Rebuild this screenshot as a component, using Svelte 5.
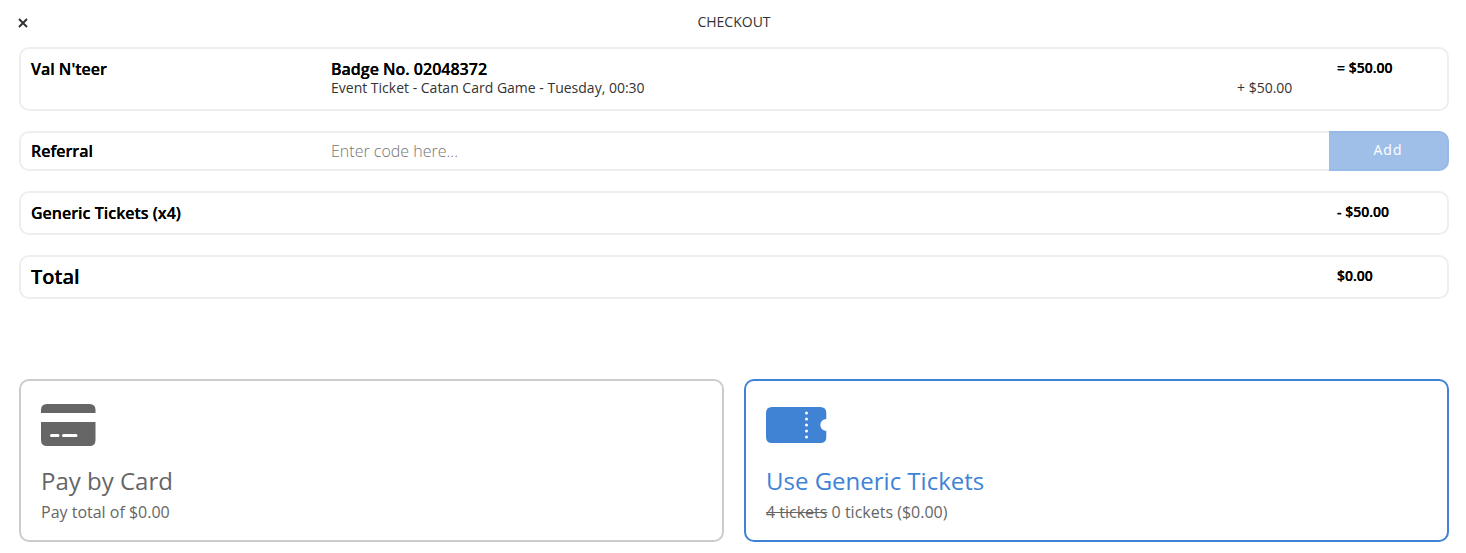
<script>
  let code = $state("");
  let method = $state("tickets");
</script>

<main>
  <header>
    <button class="close" type="button" aria-label="Close">
      <svg width="10" height="10" viewBox="0 0 10 10" fill="none" aria-hidden="true">
        <path d="M1 1L9 9M9 1L1 9" stroke="#333" stroke-width="2" />
      </svg>
    </button>
    <h1>CHECKOUT</h1>
  </header>

  <section class="order">
    <div class="row">
      <h2 class="name">Val N'teer</h2>
      <div class="items">
        <h2>Badge No. 02048372</h2>
        <div class="item">
          <span>Event Ticket - Catan Card Game - Tuesday, 00:30</span>
          <span class="price">+ $50.00</span>
        </div>
      </div>
      <strong class="amount">= $50.00</strong>
    </div>

    <form class="row referral" onsubmit={(e) => e.preventDefault()}>
      <label class="name" for="code">Referral</label>
      <input id="code" type="text" placeholder="Enter code here..." bind:value={code} />
      <button class="add" type="submit" disabled={!code}>Add</button>
    </form>

    <div class="row">
      <h2 class="name">Generic Tickets (x4)</h2>
      <strong class="amount">- $50.00</strong>
    </div>

    <div class="row">
      <h2 class="name total">Total</h2>
      <strong class="amount">$0.00</strong>
    </div>
  </section>

  <section class="methods">
    <button
      class="method"
      class:selected={method === "card"}
      type="button"
      aria-pressed={method === "card"}
      onclick={() => (method = "card")}
    >
      <svg width="60" height="48" viewBox="0 0 60 48" fill="currentColor" aria-hidden="true">
        <path d="M6 3H48.5Q54.5 3 54.5 9V12H0V9Q0 3 6 3Z" />
        <path
          fill-rule="evenodd"
          d="M0 21H54.5V39Q54.5 45 48.5 45H6Q0 45 0 39ZM10.5 33A1.5 1.5 0 0 0 10.5 36H17A1.5 1.5 0 0 0 17 33ZM22.5 33A1.5 1.5 0 0 0 22.5 36H35A1.5 1.5 0 0 0 35 33Z"
        />
      </svg>
      <span class="title">Pay by Card</span>
      <span class="detail">Pay total of $0.00</span>
    </button>

    <button
      class="method"
      class:selected={method === "tickets"}
      type="button"
      aria-pressed={method === "tickets"}
      onclick={() => (method = "tickets")}
    >
      <svg width="61" height="48" viewBox="0 0 61 48" fill="currentColor" aria-hidden="true">
        <path d="M6 6H54.3Q60.3 6 60.3 12V18A6 6 0 0 0 60.3 30V36Q60.3 42 54.3 42H6Q0 42 0 36V12Q0 6 6 6Z" />
        {#each [12, 18, 24, 30, 36] as y}
          <circle cx="40.5" cy={y} r="1.5" fill="#fff" />
        {/each}
      </svg>
      <span class="title">Use Generic Tickets</span>
      <span class="detail"><s>4 tickets</s> 0 tickets ($0.00)</span>
    </button>
  </section>
</main>

<style>
  :global(body) {
    margin: 0;
    background: #fff;
  }

  main {
    box-sizing: border-box;
    padding: 0 17px 11px 19px;
    color: #333;
    font-family: "Open Sans", "Noto Sans", sans-serif;
    font-size: 14px;
    line-height: 20px;
  }

  main * {
    box-sizing: border-box;
  }

  button,
  input {
    font-family: inherit;
  }

  button {
    cursor: pointer;
  }

  header {
    display: grid;
    grid-template-columns: 20px 1fr 20px;
    align-items: center;
    height: 47px;
    padding-bottom: 3px;
  }

  .close {
    display: flex;
    justify-self: start;
    margin-left: -1px;
    padding: 2px 0 0;
    border: none;
    background: none;
  }

  h1 {
    margin: 0;
    font-size: 14px;
    font-weight: 400;
    text-align: center;
  }

  h2,
  label {
    margin: 0;
    color: #000;
    font-size: 16px;
    font-weight: 600;
    line-height: 20px;
    text-shadow: 0 0 0 #000;
  }

  .order {
    display: flex;
    flex-direction: column;
    gap: 20px;
  }

  .row {
    display: flex;
    padding: 10px;
    border: 2px solid #eee;
    border-radius: 10px;
  }

  .name {
    width: 300px;
    flex-shrink: 0;
  }

  .total {
    font-size: 20px;
  }

  .items {
    flex: 1;
    padding-bottom: 2px;
  }

  .item {
    display: flex;
    justify-content: space-between;
    line-height: 18px;
  }

  .price {
    width: 100px;
  }

  .amount {
    width: 100px;
    margin-left: auto;
    color: #000;
    font-weight: 600;
    line-height: 18px;
    text-shadow: 0 0 0 #000;
  }

  .referral {
    align-items: stretch;
    height: 40px;
    padding: 0 0 0 10px;
  }

  .referral .name {
    line-height: 36px;
  }

  input {
    flex: 1;
    min-width: 0;
    padding: 0;
    border: none;
    outline: none;
    background: none;
    color: #333;
    font-size: 16px;
    font-weight: 300;
  }

  input::placeholder {
    color: #757575;
  }

  .add {
    width: 120px;
    margin: -2px;
    padding: 0 0 4px;
    border: 2px solid #97b9e5;
    border-left: none;
    border-radius: 0 10px 10px 0;
    background: #9fbfe9;
    color: #fff;
    font-size: 14px;
    letter-spacing: 1px;
  }

  .methods {
    display: grid;
    grid-template-columns: 1fr 1fr;
    gap: 20px;
    margin-top: 80px;
  }

  .method {
    display: flex;
    flex-direction: column;
    align-items: flex-start;
    padding: 20px;
    border: 2px solid #ccc;
    border-radius: 10px;
    background: #fff;
    color: #666;
    text-align: left;
  }

  .title {
    margin-top: 16px;
    font-size: 24px;
    line-height: 32px;
  }

  .detail {
    margin-top: 7px;
    color: #666;
    font-size: 16px;
    line-height: 16px;
  }

  .selected {
    border-color: #4083d5;
    color: #4083d5;
  }
</style>
